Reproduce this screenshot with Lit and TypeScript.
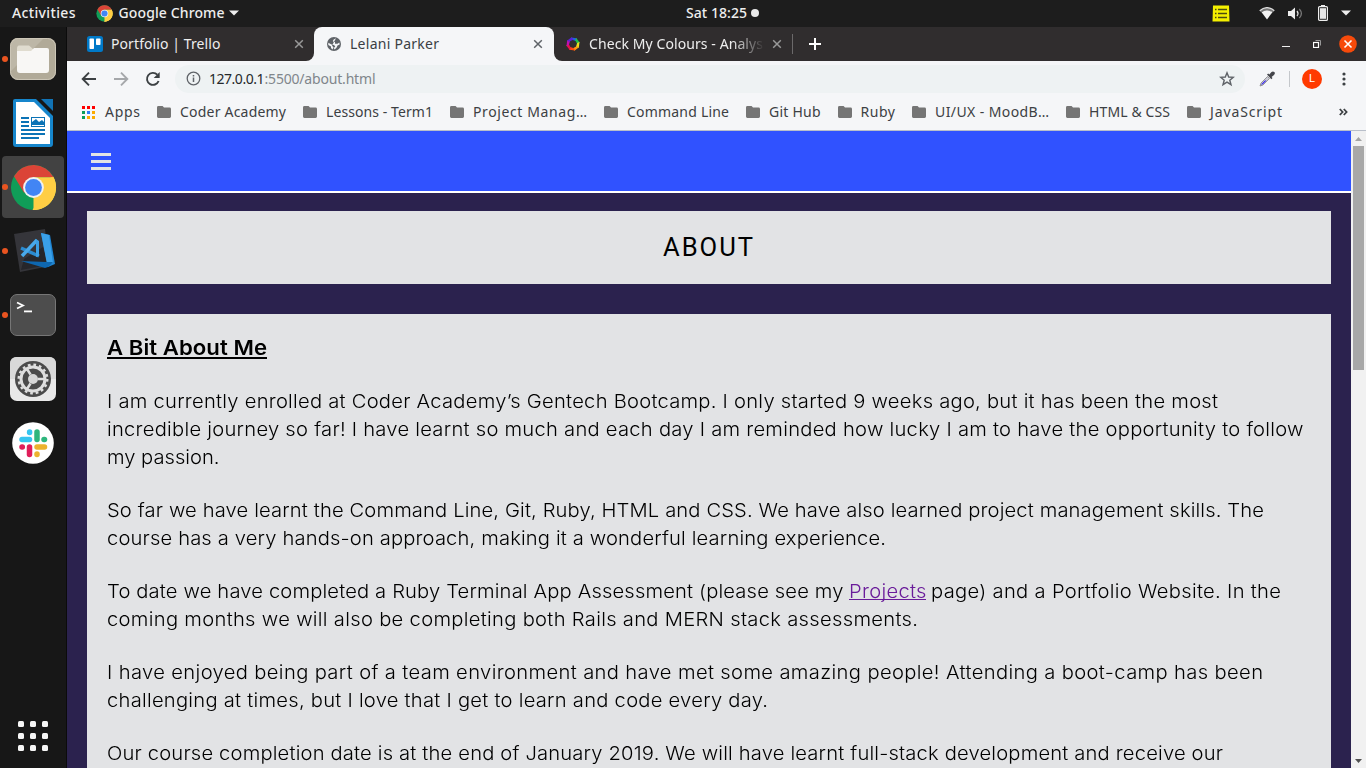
import { LitElement, html, css, svg } from "lit";
import { customElement, property, state } from "lit/decorators.js";

/** A run of text spaced out evenly so that it fills a given width. */
@customElement("fit-text")
class FitText extends LitElement {
  @property() text = "";
  @property({ type: Number }) width = 0;
  @property({ type: Number }) stretch = 1;
  @state() private spacing = 0;
  static styles = css`
    :host { display: inline-block; white-space: pre; flex: none; }
    .box { display: block; }
    .run { display: inline-block; transform-origin: 0 50%; text-decoration: inherit; }
  `;
  firstUpdated() {
    const run = this.renderRoot.querySelector(".run")!;
    const natural = run.getBoundingClientRect().width;
    this.spacing = (this.width - natural) / this.stretch / Math.max(1, this.text.length - 1);
  }
  render() {
    return html`<span class="box" style="width:${this.width}px"><span class="run" style="letter-spacing:${this.spacing}px;transform:${this.stretch === 1 ? "none" : `scaleX(${this.stretch})`}">${this.text}</span></span>`;
  }
}

const fit = (text: string, width: number, stretch = 1) => html`<fit-text .text=${text} .width=${width} .stretch=${stretch}></fit-text>`;
const WIDE = 1.09;

const chromeLogo = (size: number) => html`<svg width=${size} height=${size} viewBox="0 0 48 48">
  <circle cx="24" cy="24" r="23" fill="#109d58"></circle>
  <path d="M24 24 43.9 12.5A23 23 0 0 1 24 47Z" fill="#ffce44"></path>
  <path d="M4.1 12.5A23 23 0 0 1 44.5 13.5L24 13.5 14.5 29.5Z" fill="#db4437"></path>
  <path d="M24 13.5H44.5A23 23 0 0 1 23 47L33.5 29.5Z" fill="#ffce44"></path>
  <circle cx="24" cy="24" r="10.6" fill="#f1f1f1"></circle>
  <circle cx="24" cy="24" r="8.600" fill="#4285f4"></circle>
</svg>`;

const closeMark = (color: string) => html`<svg width="10" height="10" viewBox="0 0 10 10"><path d="M1.2 1.2 8.8 8.8M8.8 1.2 1.2 8.8" stroke=${color} stroke-width="1.5"></path></svg>`;

const folder = html`<svg width="14" height="12" viewBox="0 0 14 12"><path d="M1.4 0H5.6L7 1.6H12.6Q14 1.6 14 3V10.6Q14 12 12.6 12H1.4Q0 12 0 10.6V1.4Q0 0 1.4 0Z" fill="#757575"></path></svg>`;

const filesIcon = html`<svg width="48" height="44" viewBox="0 0 48 44">
  <rect x="1" y="1" width="46" height="42" rx="8" fill="#b1aa98"></rect>
  <path d="M9 1H35L2 34V9Q2 1 9 1Z" fill="#bdb7a7"></path>
  <rect x="1.5" y="1.5" width="45" height="41" rx="8" fill="none" stroke="#ccc6b7"></rect>
  <path d="M8 12Q8 8.500 10 8.500H20L24 12H34V22H8Z" fill="#e0dccf"></path>
  <path d="M8 14H22L25 11H38Q40 11 40 13V33Q40 36 37 36H11Q8 36 8 33Z" fill="#f8f7f5"></path>
</svg>`;

const writerIcon = html`<svg width="42" height="50" viewBox="0 0 42 50">
  <path d="M3 1H24L41 18V46Q41 49 38 49H4Q1 49 1 46V3Q1 1 3 1Z" fill="#1686cc"></path>
  <path d="M4 4H22L38 20V46H4Z" fill="#fff"></path>
  <path d="M29 1H41V13Z" fill="#1173b5"></path>
  <g fill="#0b73b6"><rect x="9" y="19" width="8" height="2"></rect><rect x="9" y="23" width="8" height="2"></rect><rect x="9" y="27" width="8" height="2"></rect>
  <rect x="9" y="31" width="24" height="2"></rect><rect x="9" y="35" width="24" height="2"></rect><rect x="9" y="39" width="18" height="2"></rect>
  <path d="M20 27V24L24 21 27 24 30 22 32 24V27Z"></path></g>
  <rect x="19.500" y="19.500" width="13" height="9" fill="none" stroke="#0b73b6"></rect>
</svg>`;

const codeIcon = html`<svg width="44" height="46" viewBox="0 0 44 46">
  <path d="M1 7 32 2 37 39 7 45Z" fill="#35353a"></path>
  <path d="M11 32 30 20 35 38 8 43Z" fill="#26262a"></path>
  <path d="M28 6 37 8 42 37 35 40Z" fill="#1e83d0"></path>
  <path d="M28 6 36 8 40 36 34 37Z" fill="#3aa0e8"></path>
  <path d="M8 34 33 35 40 35 35 40 32 41Z" fill="#0e67b0"></path>
  <path d="M8 21 26 29" fill="none" stroke="#2b8bd0" stroke-width="3.500"></path>
  <path d="M9 29 24 13" fill="none" stroke="#48a9ea" stroke-width="3.500"></path>
  <path d="M23 12 26 14V29L23 30Z" fill="#3ca0e5"></path>
</svg>`;

const terminalIcon = html`<svg width="48" height="44" viewBox="0 0 48 44">
  <rect x="1.5" y="1.500" width="45" height="41" rx="6.500" fill="#4d4d4d" stroke="#767676"></rect>
  <path d="M8 9.500 14 12.500 8 15.500" fill="none" stroke="#fff" stroke-width="1.800"></path>
  <rect x="15" y="17.500" width="8" height="1.800" fill="#fff"></rect>
</svg>`;

const settingsIcon = html`<svg width="48" height="46" viewBox="0 0 48 46">
  <rect x="1" y="1" width="46" height="44" rx="7" fill="#e9e9e9"></rect>
  <path d="M1 23V8Q1 1 8 1H40Q47 1 47 8V23Z" fill="#d9d9d9"></path>
  <circle cx="24" cy="23" r="18" fill="#4b4b4b"></circle>
  <circle cx="24" cy="23" r="12" fill="none" stroke="#dedede" stroke-width="3"></circle>
  <circle cx="24" cy="23" r="14.300" fill="none" stroke="#dedede" stroke-width="2.400" stroke-dasharray="2.700 2.915"></circle>
  <circle cx="24" cy="23" r="5" fill="#d6d6d6"></circle>
  <g stroke="#dedede" stroke-width="2.500"><path d="M29 23H36M21.500 18.500 18 13M21.500 27.500 18 33"></path></g>
</svg>`;

const slackIcon = html`<svg width="42" height="42" viewBox="0 0 42 42">
  <circle cx="21" cy="21" r="20.800" fill="#fff"></circle>
  <g stroke-width="5.500" stroke-linecap="round" fill="none">
    <path d="M10 17.500H17.500" stroke="#36c5f0"></path><path d="M17.600 10V10.500" stroke="#36c5f0"></path>
    <path d="M25 10V17.500" stroke="#2eb67d"></path><path d="M32 17.500H32.500" stroke="#2eb67d"></path>
    <path d="M25 25H32.500" stroke="#ecb22e"></path><path d="M25 32V32.500" stroke="#ecb22e"></path>
    <path d="M17.500 25V32.500" stroke="#e01e5a"></path><path d="M10 25H10.300" stroke="#e01e5a"></path>
  </g>
</svg>`;

const dockApps = [
  { icon: filesIcon, running: true },
  { icon: writerIcon },
  { icon: chromeLogo(47), running: true, active: true },
  { icon: codeIcon, running: true, kind: "code" },
  { icon: terminalIcon, running: true },
  { icon: settingsIcon },
  { icon: slackIcon },
];

const bookmarks: [string, number][] = [
  ["Coder Academy", 106], ["Lessons - Term1", 107], ["Project Manag…", 114],
  ["Command Line", 102], ["Git Hub", 51.5], ["Ruby", 34.5],
  ["UI/UX - MoodB…", 114], ["HTML & CSS", 81], ["JavaScript", 72],
];

const colourWheel = ["#2060e0", "#22c04a", "#e8e020", "#ff9a10", "#ff4a12", "#e81050", "#c010b0", "#5a20d8"];

@customElement("app-root")
class AppRoot extends LitElement {
  static styles = css`
    :host { display: grid; grid-template-rows: 27px 741px; width: 1366px; height: 768px; overflow: hidden; font-family: "Noto Sans", "Open Sans", sans-serif; font-size: 14px; line-height: 20px; background: #171717; }
    svg { display: block; flex: none; }
    .system { background: #1d1d1d; color: #eee; display: grid; grid-template-columns: 1fr auto 1fr; align-items: center; font-weight: 500; }
    .left { display: flex; align-items: center; padding-left: 12px; padding-bottom: 1px; }
    .left .app { margin-left: 20px; margin-right: 6px; }
    .left .caret { margin-left: 4px; }
    .clock { display: flex; align-items: center; gap: 4px; padding-left: 79px; padding-bottom: 1px; }
    .dot { width: 8px; height: 8px; border-radius: 50%; background: #e9e9e9; }
    .tray { display: flex; align-items: center; justify-content: flex-end; padding: 0 15px 1px 0; }
    .wifi { margin-left: 29px; }
    .sound { margin-left: 13px; }
    .power { margin-left: 15px; }
    .menu { margin-left: 13px; }
    .desk { display: grid; grid-template-columns: 67px 1299px; }
    .dock { background: #171717; border-right: 1px solid #0b0b0b; display: flex; flex-direction: column; box-sizing: border-box; }
    .slot { position: relative; height: 64px; display: flex; align-items: center; justify-content: center; }
    .tile { width: 62px; height: 62px; border-radius: 4px; display: flex; align-items: center; justify-content: center; }
    .tile.active { background: #424242; }
    .tile.code { padding-left: 4px; padding-bottom: 2px; box-sizing: border-box; }
    .running { position: absolute; left: 2px; top: 29px; width: 6px; height: 6px; border-radius: 50%; background: #e95420; }
    .grid { display: grid; grid-template-columns: repeat(3, 6px); gap: 6px; margin: auto auto 17px 18px; }
    .grid i { width: 6px; height: 6px; border-radius: 1.5px; background: #f6f6f6; }
    .browser { display: grid; grid-template-rows: 34px 35px 34px 1px 637px; background: #f5f6f8; }
    .strip { background: #302d2e; display: flex; align-items: stretch; }
    .tab { display: flex; align-items: center; box-sizing: border-box; color: #eee; }
    .one { width: 247px; padding: 0 10px 0 20px; background: #302d2e; border-bottom-right-radius: 8px; gap: 8px; }
    .two { width: 240px; padding: 0 11px 0 13px; background: #f5f6f8; border-radius: 8px 8px 0 0; color: #3b3f44; gap: 9px; }
    .three { padding-left: 12px; background: #302d2e; border-bottom-left-radius: 8px; gap: 9px; width: 228px; }
    .under { background: linear-gradient(#302d2e 50%, #f5f6f8 50%); display: flex; }
    .tab .close { margin-left: auto; }
    .fade { width: 174px; -webkit-mask-image: linear-gradient(90deg, #000 82%, transparent 101%); }
    .rule { width: 1px; height: 20px; background: #6b696a; align-self: center; margin-left: 10px; }
    .plus { align-self: center; margin-left: 16px; }
    .controls { margin-left: auto; display: flex; align-items: center; }
    .restore { margin-left: 23px; }
    .quit { margin: 0 9px 0 18px; }
    .toolbar { display: flex; align-items: center; padding: 0 14px; box-sizing: border-box; }
    .toolbar > .arrow { margin-right: 16px; }
    .url { flex: none; width: 1070px; height: 28px; border-radius: 14px; background: #eef2f3; display: flex; align-items: center; box-sizing: border-box; padding: 0 10px; color: #25282b; margin-left: -2px; }
    .url .path { color: #80868b; }
    .url .info { margin: 0 8.5px 0 .5px; }
    .url .star { margin-left: auto; }
    .dropper { margin-left: 14px; }
    .avatar { width: 20px; height: 20px; border-radius: 50%; background: #ff3a00; color: #fff; font: 11px/20px "Roboto", sans-serif; text-align: center; margin: 0 20px 0 12px; }
    .vr { width: 1px; height: 16px; background: #c4c7cb; margin-left: 14px; }
    .marks { display: flex; align-items: center; color: #3c4043; padding: 0 18px 2px 15px; }
    .marks .apps { margin-right: 10px; }
    .mark { display: flex; align-items: center; gap: 9px; margin-left: 17px; }
    .more { margin-left: auto; }
    .edge { background: #b9bfca; }
    .view { display: grid; grid-template-columns: 1284px 15px; overflow: hidden; }
    .page { background: #2b224e; overflow: hidden; }
    .nav { background: #3052ff; border-bottom: 2px solid #fff; display: flex; align-items: center; padding: 2px 0 0 24px; height: 58px; }
    .title { margin: 18px 20px 30px; height: 73px; background: #e2e3e5; display: flex; align-items: center; justify-content: center; font: 25.600px/30px "Roboto", sans-serif; color: #000; padding: 0 2px 2px 0; box-sizing: border-box; }
    .card { margin: 0 20px; height: 500px; background: #e2e3e5; padding: 20px 20px 0; color: #000; font: 300 18.500px/28px "Inter", sans-serif; box-sizing: border-box; }
    .head { font-size: 20.500px; font-weight: 600; line-height: 28px; height: 23px; width: 160px; border-bottom: 2px solid #000; margin-bottom: 28px; white-space: nowrap; }
    .para { margin: 0 0 25px; }
    .row { display: flex; gap: 5px; height: 28px; }
    .link { color: #6a1b9a; height: 22px; border-bottom: 1px solid #6a1b9a; }
    .scroll { background: #f1f1f1; display: flex; flex-direction: column; align-items: center; }
    .thumb { width: 11px; height: 224px; background: #a8a8a8; }
    .up { margin: 6px 0 5px; }
    .down { margin: auto 0 5px; }
  `;

  private line(text: string, width: number) {
    return html`<div class="row">${fit(text, width, WIDE)}</div>`;
  }

  render() {
    return html`
      <header class="system">
        <div class="left">
          ${fit("Activities", 63.5)}
          <span class="app">${chromeLogo(17)}</span>
          ${fit("Google Chrome", 106)}
          <svg class="caret" width="10" height="6" viewBox="0 0 10 6"><path d="M0 .5H10L5 5.500Z" fill="#eee"></path></svg>
        </div>
        <div class="clock">${fit("Sat 18:25", 61)}<span class="dot"></span></div>
        <div class="tray">
          <svg width="18" height="17" viewBox="0 0 18 17"><path d="M1 .5H17L17.500 16.500H.5Z" fill="#f4f000"></path><path d="M3 4.500H4.500M6 4.500H15M3 8.500H4.500M6 8.500H15M3 12.500H4.500M6 12.500H15" stroke="#4c4b10" stroke-width="1.300"></path></svg>
          <svg class="wifi" width="16" height="13" viewBox="0 0 16 13"><path d="M.7 3.800Q8-2.400 15.300 3.800L13.800 5.600Q8 1 2.200 5.600Z" fill="#777"></path><path d="M.7 3.700Q8-2.400 15.300 3.700" fill="none" stroke="#ddd" stroke-width="1.300"></path><path d="M2.600 5.200Q8 1.300 13.400 5.200L8 12.500Z" fill="#f3f3f3"></path></svg>
          <svg class="sound" width="15" height="13" viewBox="0 0 15 13"><path d="M0 4H3L7 .5V12.500L3 9H0Z" fill="#eee"></path><path d="M9 4Q11 6.500 9 9" fill="none" stroke="#ddd" stroke-width="1.300"></path><path d="M11.300 2Q15.500 6.500 11.300 11" fill="none" stroke="#777" stroke-width="1.300"></path></svg>
          <svg class="power" width="10" height="16" viewBox="0 0 10 16"><path d="M3 0H7V2H3Z" fill="#eee"></path><rect x=".6" y="1.600" width="8.800" height="13.800" rx="1" fill="none" stroke="#eee" stroke-width="1.200"></rect><rect x="2" y="3.200" width="6" height="10.600" fill="#e8e8e8"></rect></svg>
          <svg class="menu" width="10" height="6" viewBox="0 0 10 6"><path d="M0 .5H10L5 5.500Z" fill="#eee"></path></svg>
        </div>
      </header>
      <div class="desk">
        <nav class="dock">
          ${dockApps.map(a => html`<div class="slot">${a.running ? html`<span class="running"></span>` : ""}<div class="tile ${a.active ? "active" : ""} ${a.kind ?? ""}">${a.icon}</div></div>`)}
          <div class="grid">${Array.from({ length: 9 }, () => html`<i></i>`)}</div>
        </nav>
        <div class="browser">
          <div class="strip">
            <div class="under">
              <div class="tab one">
                <svg width="16" height="16" viewBox="0 0 16 16"><rect width="16" height="16" rx="2.500" fill="#0079c8"></rect><rect x="2.500" y="2.500" width="4.500" height="10.500" rx=".8" fill="#fff"></rect><rect x="9" y="2.500" width="4.500" height="6.500" rx=".8" fill="#fff"></rect></svg>
                ${fit("Portfolio | Trello", 109.500)}<span class="close">${closeMark("#999")}</span>
              </div>
              <div class="tab two">
                <svg width="14" height="14" viewBox="0 0 14 14"><circle cx="7" cy="7" r="7" fill="#5f6368"></circle><path d="M9 1.300Q6 2.500 5.800 4 6 5.200 8 5V6.800H10.500L12.300 5.500 12.700 7.500 10.500 8.500 9.500 10.800 7.600 12.500 6.800 11 8.300 9.500 7 8 4.500 7.500 1.300 5.800 1.300 8 4 9.500V11L5.500 12.500 6.500 10.500 5 8.500Z" fill="#f5f6f8"></path></svg>
                ${fit("Lelani Parker", 89)}<span class="close">${closeMark("#5f6368")}</span>
              </div>
              <div class="tab three">
                <svg width="14" height="14" viewBox="-7 -7 14 14">${colourWheel.map((c, i) => svg`<path d="M-2 -6.500 3.800 -5.800 3.500 -2.800 -1 -4.200Z" fill=${c} transform="rotate(${i * 45})"></path>`)}</svg>
                <div class="fade">${fit("Check My Colours - Analys", 174)}</div>
                <span class="close">${closeMark("#999")}</span>
              </div>
            </div>
            <span class="rule"></span>
            <svg class="plus" width="12" height="12" viewBox="0 0 12 12"><path d="M6 0V12M0 6H12" stroke="#fff" stroke-width="2"></path></svg>
            <div class="controls">
              <svg width="8" height="12" viewBox="0 0 8 12"><path d="M0 8.500H8" stroke="#eee"></path></svg>
              <svg class="restore" width="8" height="8" viewBox="0 0 8 8"><rect x=".5" y="2.500" width="5" height="5" fill="none" stroke="#fff" stroke-width="1.200"></rect><path d="M2.500 .5H7.500V5.500" fill="none" stroke="#999"></path></svg>
              <svg class="quit" width="18" height="18" viewBox="0 0 18 18"><circle cx="9" cy="9" r="8.800" fill="#f64a0b"></circle><path d="M5.500 5.500 12.500 12.500M12.500 5.500 5.500 12.500" stroke="#fff" stroke-width="1.600"></path></svg>
            </div>
          </div>
          <div class="toolbar">
            <svg class="arrow" width="16" height="16" viewBox="0 0 16 16"><path d="M15 8H2M8 1.700 1.700 8 8 14.300" fill="none" stroke="#3c4043" stroke-width="1.900"></path></svg>
            <svg class="arrow" width="16" height="16" viewBox="0 0 16 16"><path d="M1 8H14M8 1.700 14.300 8 8 14.300" fill="none" stroke="#a5a7aa" stroke-width="1.900"></path></svg>
            <svg class="arrow" width="16" height="16" viewBox="0 0 16 16"><path d="M13.600 10A6 6 0 1 1 12.300 3.700" fill="none" stroke="#3c4043" stroke-width="1.900"></path><path d="M14.700 1V7H8.700Z" fill="#3c4043"></path></svg>
            <div class="url">
              <svg class="info" width="15" height="15" viewBox="0 0 15 15"><circle cx="7.500" cy="7.500" r="6.300" fill="none" stroke="#5f6368" stroke-width="1.300"></circle><path d="M7.500 6.500V11M7.500 4V5.400" stroke="#5f6368" stroke-width="1.500"></path></svg>
              ${fit("127.0.0.1", 55.500)}<span class="path">${fit(":5500/about.html", 111)}</span>
              <svg class="star" width="16" height="16" viewBox="0 0 16 16"><path d="M8 1.800 9.700 6 14.300 6.300 10.800 9.200 12 13.700 8 11.200 4 13.700 5.200 9.200 1.700 6.300 6.300 6Z" fill="none" stroke="#5f6368" stroke-width="1.400"></path></svg>
            </div>
            <svg class="dropper" width="16" height="16" viewBox="0 0 16 16"><path d="M1 15 2 12 8.500 5.500 10.500 7.500 4 14Z" fill="#c9c9d4" stroke="#777" stroke-width=".7"></path><path d="M2 14 3 12.500 6 9.500 7.500 9.500 4 13Z" fill="#3322ee"></path><path d="M8 3.500 9.200 2.500 10.300 3.400 12.500 1Q14-.2 15.300 1T15 4L12.600 6 13.500 7 12.300 8.200Z" fill="#45464b"></path></svg>
            <span class="vr"></span>
            <span class="avatar">L</span>
            <svg width="4" height="14" viewBox="0 0 4 14"><g fill="#3c4043"><circle cx="2" cy="2" r="1.600"></circle><circle cx="2" cy="7" r="1.600"></circle><circle cx="2" cy="12" r="1.600"></circle></g></svg>
          </div>
          <div class="marks">
            <svg class="apps" width="13" height="13" viewBox="0 0 13 13">${["#f00", "#f00", "#f00", "#0a9d58", "#2b7df7", "#fbab00", "#0a9d58", "#fbab00", "#fbab00"].map((c, i) => svg`<rect x=${(i % 3) * 5} y=${Math.floor(i / 3) * 5} width="3" height="3" fill=${c}></rect>`)}</svg>
            ${fit("Apps", 35)}
            ${bookmarks.map(([t, w]) => html`<div class="mark">${folder}${fit(t, w)}</div>`)}
            <svg class="more" width="9" height="8" viewBox="0 0 9 8"><path d="M.8 1 3.600 4 .8 7M4.800 1 7.600 4 4.800 7" fill="none" stroke="#3c4043" stroke-width="1.800"></path></svg>
          </div>
          <div class="edge"></div>
          <div class="view">
            <main class="page">
              <div class="nav"><svg width="20" height="18" viewBox="0 0 20 18"><path d="M0 1.500H20M0 8.500H20M0 15.500H20" stroke="#e2e3e5" stroke-width="3"></path></svg></div>
              <div class="title">${fit("ABOUT", 90)}</div>
              <section class="card">
                <div class="head">${fit("A Bit About Me", 160, 1.08)}</div>
                <div class="para">
                  ${this.line("I am currently enrolled at Coder Academy’s Gentech Bootcamp. I only started 9 weeks ago, but it has been the most", 1111)}
                  ${this.line("incredible journey so far! I have learnt so much and each day I am reminded how lucky I am to have the opportunity to follow", 1196.500)}
                  ${this.line("my passion.", 112.500)}
                </div>
                <div class="para">
                  ${this.line("So far we have learnt the Command Line, Git, Ruby, HTML and CSS. We have also learned project management skills. The", 1157)}
                  ${this.line("course has a very hands-on approach, making it a wonderful learning experience.", 779)}
                </div>
                <div class="para">
                  <div class="row">${fit("To date we have completed a Ruby Terminal App Assessment (please see my", 736.500, WIDE)}<a class="link">${fit("Projects", 77.500, WIDE)}</a>${fit("page) and a Portfolio Website. In the", 350, WIDE)}</div>
                  ${this.line("coming months we will also be completing both Rails and MERN stack assessments.", 811)}
                </div>
                <div class="para">
                  ${this.line("I have enjoyed being part of a team environment and have met some amazing people! Attending a boot-camp has been", 1156)}
                  ${this.line("challenging at times, but I love that I get to learn and code every day.", 661)}
                </div>
                <div class="para">${this.line("Our course completion date is at the end of January 2019. We will have learnt full-stack development and receive our", 1116)}</div>
              </section>
            </main>
            <div class="scroll">
              <svg class="up" width="7" height="4" viewBox="0 0 7 4"><path d="M0 4 3.500 0 7 4Z" fill="#a3a3a3"></path></svg>
              <div class="thumb"></div>
              <svg class="down" width="7" height="4" viewBox="0 0 7 4"><path d="M0 0H7L3.500 4Z" fill="#505050"></path></svg>
            </div>
          </div>
        </div>
      </div>`;
  }
}
